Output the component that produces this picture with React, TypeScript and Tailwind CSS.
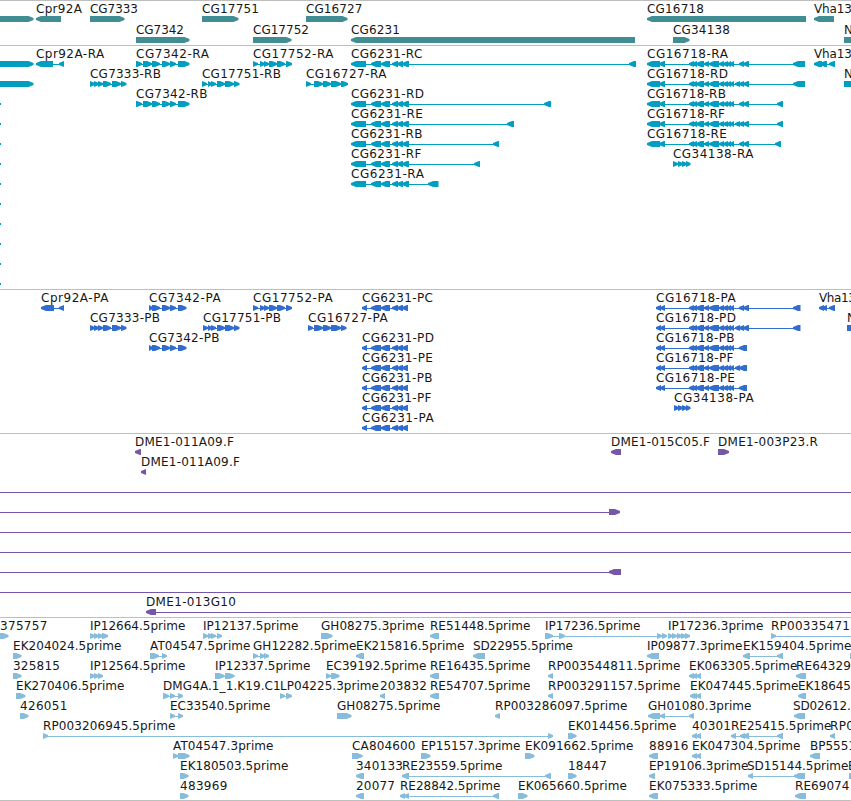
type Dir = 'L' | 'R';
type Seg = [number, number];
// name, label start, label end, direction, exon blocks
type Feature = [string, number, number, Dir, Seg[]];
type Row = Feature[];

// Advance widths of DejaVu Sans in em, used to fit each label to its slot.
const ADVANCE: Record<string, number> = {
  A: 0.684, B: 0.686, C: 0.698, D: 0.77, E: 0.632, F: 0.575, G: 0.775, H: 0.752, I: 0.295,
  K: 0.656, L: 0.557, M: 0.863, N: 0.748, P: 0.603, R: 0.695, S: 0.635, T: 0.611, V: 0.684,
  '.': 0.318, '-': 0.361, _: 0.5, a: 0.613, e: 0.615, h: 0.634, i: 0.278, m: 0.974, p: 0.635, r: 0.411,
};

function spacing(text: string, width: number) {
  let natural = 0;
  for (const c of text) natural += (ADVANCE[c] ?? 0.636) * 12;
  return (width - natural - 0.1) / Math.max(1, text.length - 1);
}

function block([a, b]: Seg, dir: Dir) {
  const t = Math.min(5, b - a);
  return dir === 'R'
    ? `M${a} 0H${b - t}L${b} 2V4L${b - t} 6H${a}Z`
    : `M${b} 0H${a + t}L${a} 2V4L${a + t} 6H${b}Z`;
}

const transcriptHead: Seg[] = [[647, 660], [659, 665]];
const middle: Seg[] = [[689, 694], [692, 697], [696, 704], [704, 709], [709, 719], [719, 724], [723, 728], [727, 731], [730, 734]];
const extra: Seg[] = [[735, 740]];
const tail: Seg[] = [[739, 744], [743, 749]];
const shortTail: Seg[] = [[739, 747]];
const exons6231: Seg[] = [[351, 366], [371, 381], [381, 390], [392, 398], [397, 403], [402, 409]];
const cds6231: Seg[] = [[362, 367], [371, 381], [381, 390], [392, 398], [397, 403], [402, 408]];
const exons7342: Seg[] = [[136, 142], [143, 152], [152, 160], [162, 170], [170, 176], [178, 189.5]];
const cds7342: Seg[] = [[149, 153], [152, 160], [162, 170], [170, 176], [178, 186.5]];
const exons7333: Seg[] = [[90, 95], [94, 99], [98, 103], [103, 111], [112, 121], [121, 126.5]];
const exons17751: Seg[] = [[203, 208], [208, 212], [211, 216], [217, 225], [225, 234], [234, 239.5]];
const exons17752: Seg[] = [[253, 258], [260, 265], [264, 269], [269, 277], [277, 285], [286, 292]];
const exons34138: Seg[] = [[674, 679], [678, 683], [682, 687], [686, 690.5]];
const tick: Feature = ['', 0, 0, 'R', []];

const genes: Row[] = [
  [
    ['', 0, 0, 'R', [[-9, 33.5]]],
    ['Cpr92A', 36, 82, 'L', [[36, 61]]],
    ['CG7333', 90, 138, 'R', [[90, 124.5]]],
    ['CG17751', 202, 259, 'R', [[202, 238.5]]],
    ['CG16727', 306, 362.5, 'R', [[306, 347.5]]],
    ['CG16718', 647, 704, 'L', [[647, 806]]],
    ['Vha13', 814, 852, 'L', [[814, 834]]],
  ],
  [
    ['CG7342', 136, 184, 'R', [[136, 189.5]]],
    ['CG17752', 253, 309, 'R', [[253, 291.5]]],
    ['CG6231', 351, 400, 'L', [[351, 635]]],
    ['CG34138', 673, 730, 'R', [[673, 689.5]]],
    ['N', 844, 852, 'R', [[844, 870]]],
  ],
];

const transcripts: Row[] = [
  [
    ['', 0, 0, 'R', [[-9, 33.5]]],
    ['Cpr92A-RA', 36, 105, 'L', [[36, 53], [59, 64]]],
    ['CG7342-RA', 136, 209.5, 'R', exons7342],
    ['CG17752-RA', 253, 334, 'R', exons17752],
    ['CG6231-RC', 351, 423, 'L', [...exons6231, [629, 636]]],
    ['CG16718-RA', 647, 728.5, 'L', [...transcriptHead, ...middle, ...tail, [793, 805]]],
    ['Vha13', 814, 852, 'L', [[814, 822], [820, 827], [829, 835]]],
  ],
  [
    ['', 0, 0, 'R', [[-9, 33.5]]],
    ['CG7333-RB', 90, 161, 'R', exons7333],
    ['CG17751-RB', 202, 281, 'R', [[202, 207], ...exons17751.slice(1)]],
    ['CG16727-RA', 306, 387, 'R', [[306, 311], [314, 323], [323, 331], [331, 341], [341, 348]]],
    ['CG16718-RD', 647, 728, 'L', [...transcriptHead, ...middle, ...extra, ...tail, [793, 805]]],
    ['N', 844, 852, 'R', [[844, 870]]],
  ],
  [
    tick,
    ['CG7342-RB', 136, 207.5, 'R', exons7342],
    ['CG6231-RD', 351, 424, 'L', [...exons6231, [544, 551]]],
    ['CG16718-RB', 647, 726, 'L', [...transcriptHead, ...middle, ...tail, [777, 783]]],
  ],
  [
    tick,
    ['CG6231-RE', 351, 423, 'L', [...exons6231, [507, 514]]],
    ['CG16718-RF', 647, 725, 'L', [...transcriptHead, ...middle, ...extra, ...tail, [777, 783]]],
  ],
  [
    tick,
    ['CG6231-RB', 351, 422.5, 'L', [...exons6231, [493, 499]]],
    ['CG16718-RE', 647, 727, 'L', [...transcriptHead, ...middle, ...tail, [775, 781]]],
  ],
  [
    tick,
    ['CG6231-RF', 351, 421.5, 'L', [...exons6231, [474, 480]]],
    ['CG34138-RA', 673, 754, 'R', [[673, 678], ...exons34138.slice(1)]],
  ],
  [tick, ['CG6231-RA', 351, 424.5, 'L', [...exons6231, [428, 438.5]]]],
  [tick], [tick], [tick], [tick], [tick],
];

const proteins: Row[] = [
  [
    ['Cpr92A-PA', 41, 109.5, 'L', [[41, 54], [59, 64]]],
    ['CG7342-PA', 149, 221.5, 'R', cds7342],
    ['CG17752-PA', 253, 333.5, 'R', exons17752],
    ['CG6231-PC', 362, 433, 'L', cds6231],
    ['CG16718-PA', 656, 736.5, 'L', [[656, 661], [660, 665], ...middle, ...tail, [793, 800.5]]],
    ['Vha13', 819, 856, 'L', [[819, 824], [822, 827], [829, 835]]],
  ],
  [
    ['CG7333-PB', 90, 160, 'R', exons7333],
    ['CG17751-PB', 203, 281, 'R', exons17751],
    ['CG16727-PA', 308, 388.5, 'R', [[308, 313], [314, 323], [323, 331], [331, 341], [341, 346.5]]],
    ['CG16718-PD', 656, 736, 'L', [[656, 661], [660, 665], ...middle, ...extra, ...tail, [793, 800.5]]],
    ['N', 847, 855, 'R', [[847, 870]]],
  ],
  [
    ['CG7342-PB', 149, 219.5, 'R', cds7342],
    ['CG6231-PD', 362, 434, 'L', cds6231],
    ['CG16718-PB', 656, 734.5, 'L', [[656, 661], [660, 665], ...middle, ...shortTail]],
  ],
  [
    ['CG6231-PE', 362, 433, 'L', cds6231],
    ['CG16718-PF', 656, 733.5, 'L', [[656, 661], [660, 665], ...middle, ...extra, ...shortTail]],
  ],
  [
    ['CG6231-PB', 362, 432.5, 'L', cds6231],
    ['CG16718-PE', 656, 735, 'L', [[656, 661], [660, 665], ...middle, ...shortTail]],
  ],
  [
    ['CG6231-PF', 362, 431.5, 'L', cds6231],
    ['CG34138-PA', 674, 754.5, 'R', exons34138],
  ],
  [['CG6231-PA', 362, 434.5, 'L', cds6231]],
];

const clones: Row[] = [
  [
    ['DME1-011A09.F', 135, 234, 'L', [[135, 141]]],
    ['DME1-015C05.F', 611, 710, 'L', [[611, 621]]],
    ['DME1-003P23.R', 718, 818, 'R', [[718, 729]]],
  ],
  [['DME1-011A09.F', 141, 240, 'L', [[141, 146]]]],
  [['', 0, 0, 'R', [[-20, -10], [860, 870]]]],
  [['', 0, 0, 'R', [[-20, -10], [609, 620]]]],
  [['', 0, 0, 'R', [[-20, -10], [860, 870]]]],
  [['', 0, 0, 'R', [[-20, -10], [860, 870]]]],
  [['', 0, 0, 'L', [[-20, -10], [609, 621]]]],
  [['', 0, 0, 'R', [[-20, -10], [860, 870]]]],
  [['DME1-013G10', 146, 236, 'L', [[146, 156], [860, 870]]]],
];

const ests: Row[] = [
  [
    ['375757', 0, 47.5, 'R', [[-3, 8.5]]],
    ['IP12664.5prime', 90, 185.5, 'R', [[90, 95], [94, 99], [98, 103], [102, 108]]],
    ['IP12137.5prime', 203, 298.5, 'R', [[203, 208], [208, 213], [211, 216], [217, 222]]],
    ['GH08275.3prime', 321, 424.5, 'R', [[321, 332.5]]],
    ['RE51448.5prime', 430, 530.5, 'L', [[430, 439]]],
    ['IP17236.5prime', 545, 640.5, 'R', [[545, 553], [559, 565], [657, 662], [662, 667]]],
    ['IP17236.3prime', 668, 763.5, 'R', [[668, 673], [672, 677], [677, 682], [681, 686], [685, 690]]],
    ['RP00335471', 771, 850, 'R', [[771, 776], [860, 870]]],
  ],
  [
    ['EK204024.5prime', 13, 121.5, 'R', [[13, 21.5]]],
    ['AT04547.5prime', 150, 251.5, 'R', [[150, 159], [162, 167]]],
    ['GH12282.5prime', 253, 356.5, 'R', [[253, 258], [260, 265], [264, 269]]],
    ['EK215816.5prime', 356, 464.5, 'L', [[356, 364]]],
    ['SD22955.5prime', 473, 573, 'L', [[473, 485]]],
    ['IP09877.3prime', 647, 742.5, 'L', [[647, 659]]],
    ['EK159404.5prime', 743, 851.5, 'L', [[743, 750], [777, 783]]],
    ['', 0, 0, 'R', [[850, 870]]],
  ],
  [
    ['325815', 13, 60, 'R', [[13, 21.5]]],
    ['IP12564.5prime', 90, 185.5, 'R', [[90, 95], [94, 99], [98, 103]]],
    ['IP12337.5prime', 215, 310.5, 'R', [[215, 224.5], [225, 234.5]]],
    ['EC39192.5prime', 326, 426.5, 'R', [[326, 331], [331, 339.5]]],
    ['RE16435.5prime', 430, 530.5, 'L', [[430, 439]]],
    ['RP003544811.5prime', 548, 680.5, 'L', [[548, 553]]],
    ['EK063305.5prime', 689, 797.5, 'L', [[689, 694], [692, 697], [696, 701]]],
    ['RE64329', 796, 851, 'L', [[796, 806]]],
  ],
  [
    ['EK270406.5prime', 16, 124.5, 'R', [[16, 25.5]]],
    ['DMG4A.1_1.K19.C1', 163, 281, 'R', [[163, 169], [170, 175], [178, 183]]],
    ['LP04225.3prime', 280, 379, 'R', [[280, 285], [286, 292]]],
    ['203832', 380, 427, 'L', [[380, 385]]],
    ['RE54707.5prime', 430, 530.5, 'L', [[430, 439]]],
    ['RP003291157.5prime', 548, 680.5, 'L', [[548, 553]]],
    ['EK047445.5prime', 690, 798.5, 'L', [[690, 695], [692, 697], [696, 701]]],
    ['EK18645', 798, 851, 'L', [[798, 806]]],
  ],
  [
    ['426051', 20, 67.5, 'R', [[20, 28.5]]],
    ['EC33540.5prime', 170, 270.5, 'R', [[170, 175], [178, 183]]],
    ['GH08275.5prime', 337, 440.5, 'R', [[337, 351.5]]],
    ['RP003286097.5prime', 495, 627.5, 'L', [[495, 500]]],
    ['GH01080.3prime', 648, 751.5, 'L', [[648, 660], [660, 665], [689, 694]]],
    ['SD02612.', 793, 851, 'L', [[794, 805]]],
  ],
  [
    ['RP003206945.5prime', 43, 175.5, 'R', [[43, 48], [548, 553]]],
    ['EK014456.5prime', 568, 676.5, 'R', [[568, 576.5]]],
    ['40301', 692, 731, 'L', [[692, 697], [696, 701]]],
    ['RE25415.5prime', 731, 831.5, 'L', [[731, 736], [740, 745], [743, 749], [777, 783]]],
    ['RP0', 830, 854, 'L', [[830, 835]]],
  ],
  [
    ['AT04547.3prime', 173, 274.5, 'R', [[173, 178], [178, 189.5]]],
    ['CA804600', 352, 415.5, 'R', [[352, 362.5]]],
    ['EP15157.3prime', 421, 520.5, 'R', [[421, 430.5]]],
    ['EK091662.5prime', 525, 633.5, 'R', [[525, 534.5]]],
    ['88916', 649, 688.5, 'L', [[649, 658]]],
    ['EK047304.5prime', 692, 800.5, 'L', [[692, 697], [696, 701]]],
    ['BP5551', 810, 856, 'L', [[810, 820]]],
  ],
  [
    ['EK180503.5prime', 180, 288.5, 'R', [[180, 188.5]]],
    ['340133', 356, 403, 'L', [[356, 364]]],
    ['RE23559.5prime', 402, 502.5, 'L', [[402, 409], [545, 551]]],
    ['18447', 568, 607, 'R', [[568, 576.5]]],
    ['EP19106.3prime', 649, 748.5, 'L', [[649, 655]]],
    ['SD15144.5prime', 747, 848.5, 'L', [[748, 753], [794, 805]]],
    ['E', 848, 856, 'R', [[849, 870]]],
  ],
  [
    ['483969', 180, 227.5, 'R', [[180, 188.5]]],
    ['20077', 356, 395, 'L', [[356, 364]]],
    ['RE28842.5prime', 400, 500.5, 'L', [[400, 405], [404, 409], [493, 499]]],
    ['EK065660.5prime', 518, 627, 'R', [[518, 527.5]]],
    ['EK075333.5prime', 649, 757.5, 'L', [[649, 658]]],
    ['RE69074', 795, 849.5, 'L', [[795, 806]]],
  ],
];

function TrackRow({ row, tall }: { row: Row; tall?: boolean }) {
  return (
    <div className={`relative w-full shrink-0 ${tall ? 'h-[21px]' : 'h-5'}`}>
      <svg className="absolute left-0 top-[15px] h-1.5 w-[851px] overflow-hidden" viewBox="0 0 851 6" fill="currentColor">
        {row.map(([, , , dir, segs], i) =>
          segs.length === 0 ? (
            <rect key={i} x={0} y={2} width={1} height={2} />
          ) : (
            <g key={i}>
              {segs.length > 1 && (
                <rect x={segs[0][0] + 2} y={3} width={segs[segs.length - 1][1] - segs[0][0] - 3} height={1} />
              )}
              {segs.map((s, k) => (
                <path key={k} d={block(s, dir)} />
              ))}
            </g>
          ),
        )}
      </svg>
      {row.map(([name, x, end], i) =>
        name ? (
          <span
            key={i}
            className="absolute top-0 whitespace-pre text-[12px] leading-4 text-neutral-900"
            style={{ left: x, letterSpacing: spacing(name, end - x) }}
          >
            {name}
          </span>
        ) : null,
      )}
    </div>
  );
}

function Track({ rows, className, tall }: { rows: Row[]; className: string; tall?: boolean }) {
  return (
    <section className={`flex shrink-0 flex-col overflow-hidden border-t border-[#bebebe] ${className}`}>
      {rows.map((row, i) => (
        <TrackRow key={i} row={row} tall={tall} />
      ))}
    </section>
  );
}

export default function App() {
  return (
    <main className="flex h-[801px] w-[851px] flex-col overflow-hidden bg-white font-['DejaVu_Sans',sans-serif]">
      <Track rows={genes} tall className="h-[45px] text-[#408e94]" />
      <Track rows={transcripts} className="h-[244px] text-[#009ec1]" />
      <Track rows={proteins} className="h-[144px] text-[#306dce]" />
      <Track rows={clones} className="h-[184px] text-[#7656a6]" />
      <Track rows={ests} className="h-[184px] border-b text-[#88bcdd]" />
    </main>
  );
}
